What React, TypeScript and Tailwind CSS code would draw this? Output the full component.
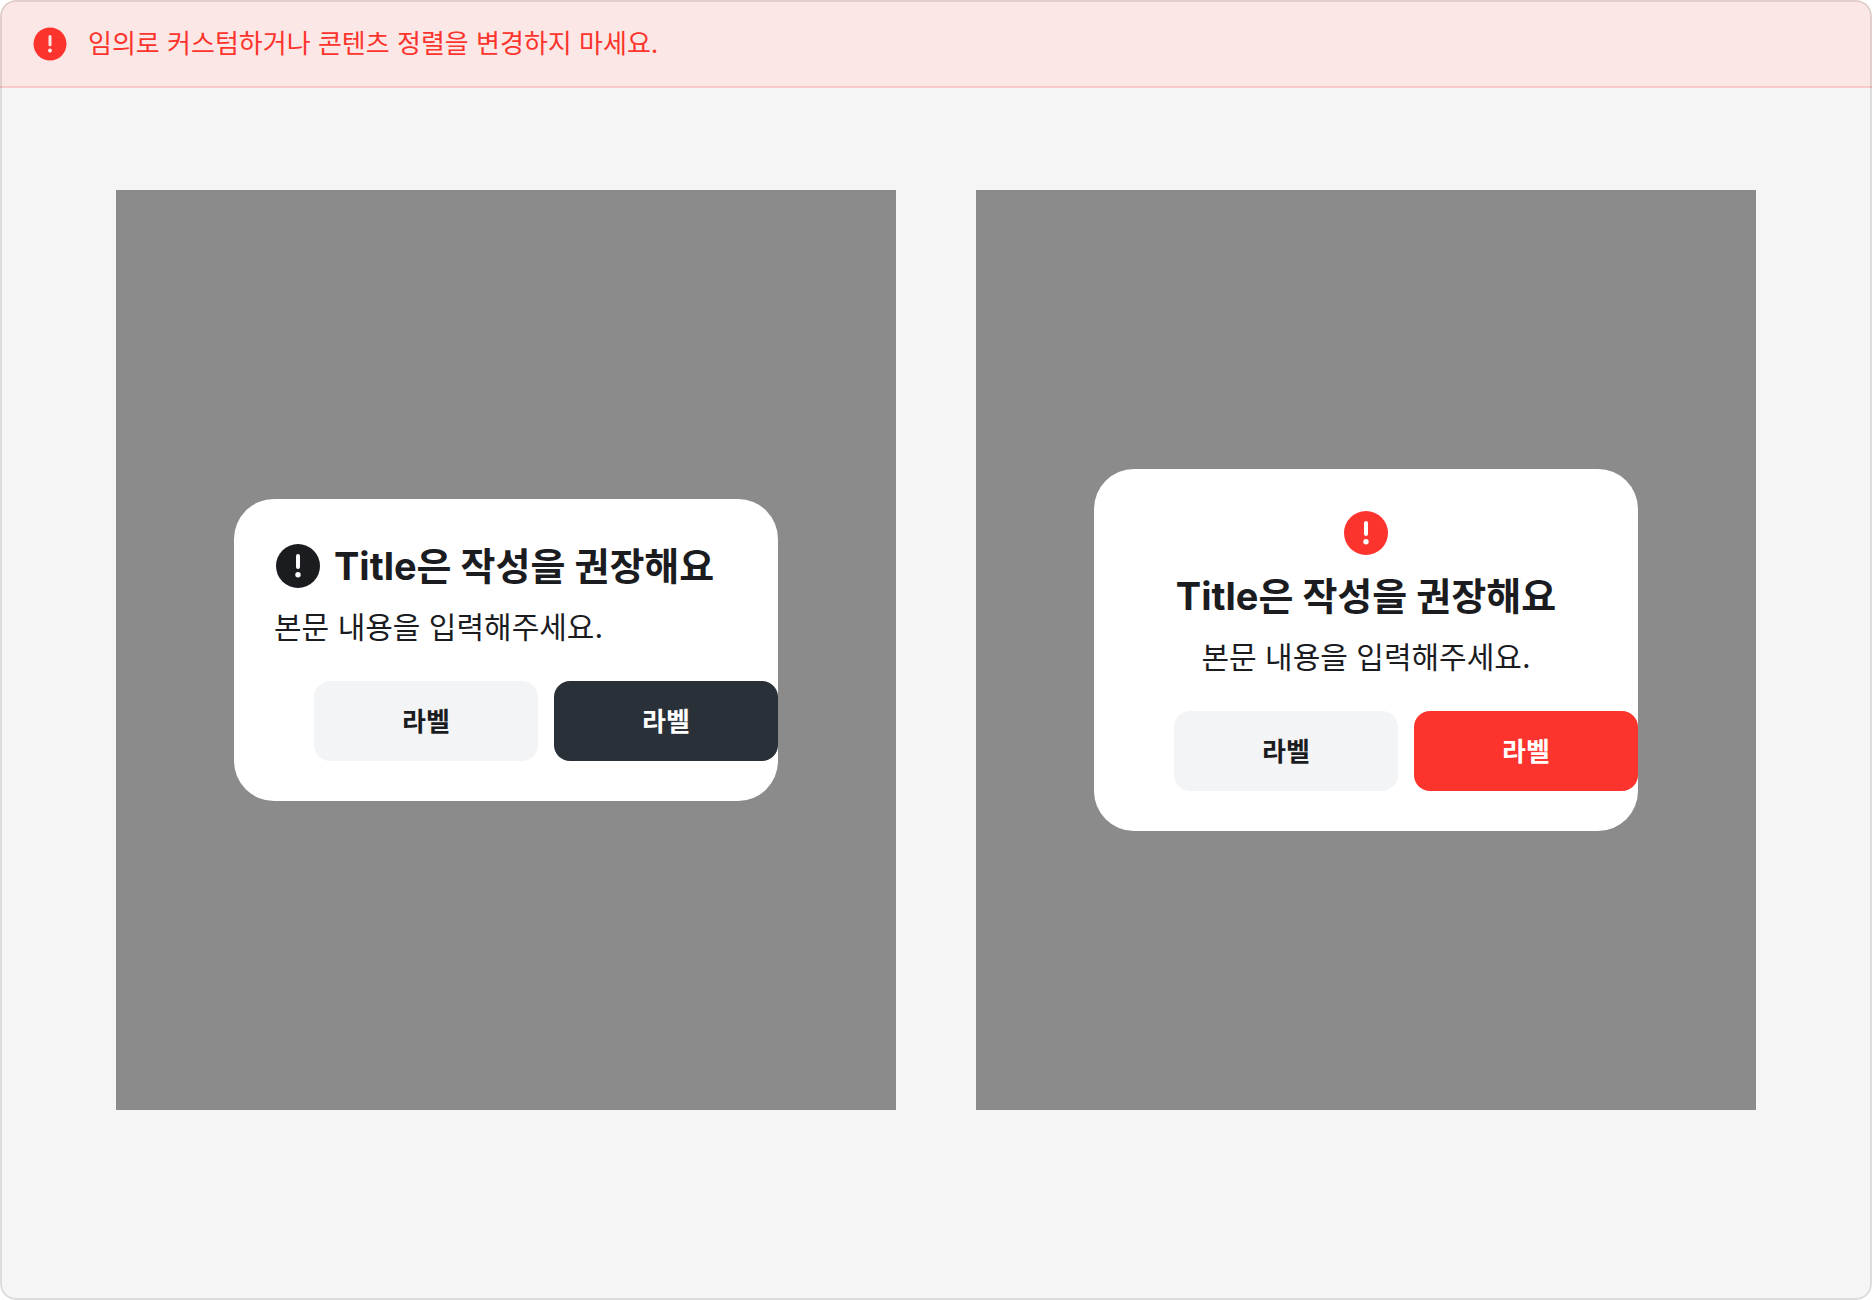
import React from 'react';
import clsx from 'clsx';

const AlertIcon: React.FC<{ className?: string }> = ({ className }) => (
  <svg viewBox="0 0 24 24" className={clsx('shrink-0', className)} aria-hidden="true">
    <circle cx="12" cy="12" r="11" fill="currentColor" />
    <rect x="11" y="6" width="2" height="7.5" rx="1" className="fill-(--mark)" />
    <circle cx="12" cy="16.4" r="1.35" className="fill-(--mark)" />
  </svg>
);

interface PopupProps {
  variant: 'inline' | 'centered';
}

const Popup: React.FC<PopupProps> = ({ variant }) => {
  const centered = variant === 'centered';

  return (
    <div className="flex min-h-[920px] flex-1 items-center justify-center bg-[#8b8b8b]">
      <section className="w-[544px] rounded-[40px] bg-white p-10 text-[#1b1c1f]">
        <div className={clsx('flex items-center gap-3', centered && 'flex-col')}>
          <AlertIcon
            className={clsx('size-12 [--mark:#ffffff]', centered && 'text-[#fc342d]')}
          />
          <h2 className="text-[38px] leading-[54px] font-bold whitespace-nowrap">
            Title은 작성을 권장해요
          </h2>
        </div>
        <p className={clsx('mt-3 text-[30px] leading-[44px]', centered && 'text-center')}>
          본문 내용을 입력해주세요.
        </p>
        {/* the action row is pushed off the card's padding */}
        <div className="mt-8 -mr-10 ml-10 flex gap-4">
          <button
            type="button"
            className="h-20 flex-1 rounded-2xl bg-[#f3f4f6] pt-0.5 text-[26px] leading-9 font-bold"
          >
            라벨
          </button>
          <button
            type="button"
            className={clsx(
              'h-20 flex-1 rounded-2xl pt-0.5 text-[26px] leading-9 font-bold text-white',
              centered ? 'bg-[#fc342d]' : 'bg-[#2a3038]'
            )}
          >
            라벨
          </button>
        </div>
      </section>
    </div>
  );
};

const App: React.FC = () => {
  return (
    <div className="bg-white font-[Inter,'Noto_Sans_CJK_KR',sans-serif]">
      <div className="relative flex min-h-screen flex-col overflow-hidden rounded-2xl bg-[#f5f5f5] after:pointer-events-none after:absolute after:inset-0 after:rounded-2xl after:border-2 after:border-black/10">
        <header className="flex h-[88px] items-center gap-5 border-b-2 border-[#f8cbca] bg-[#fbe7e5] px-8 pt-0.5 text-[#fc342d]">
          <AlertIcon className="size-9 [--mark:#fbe7e5]" />
          <p className="text-[26px] leading-10">임의로 커스텀하거나 콘텐츠 정렬을 변경하지 마세요.</p>
        </header>
        <main className="flex gap-20 px-[116px] pt-[102px] pb-[190px]">
          <Popup variant="inline" />
          <Popup variant="centered" />
        </main>
      </div>
    </div>
  );
};

export default App;
